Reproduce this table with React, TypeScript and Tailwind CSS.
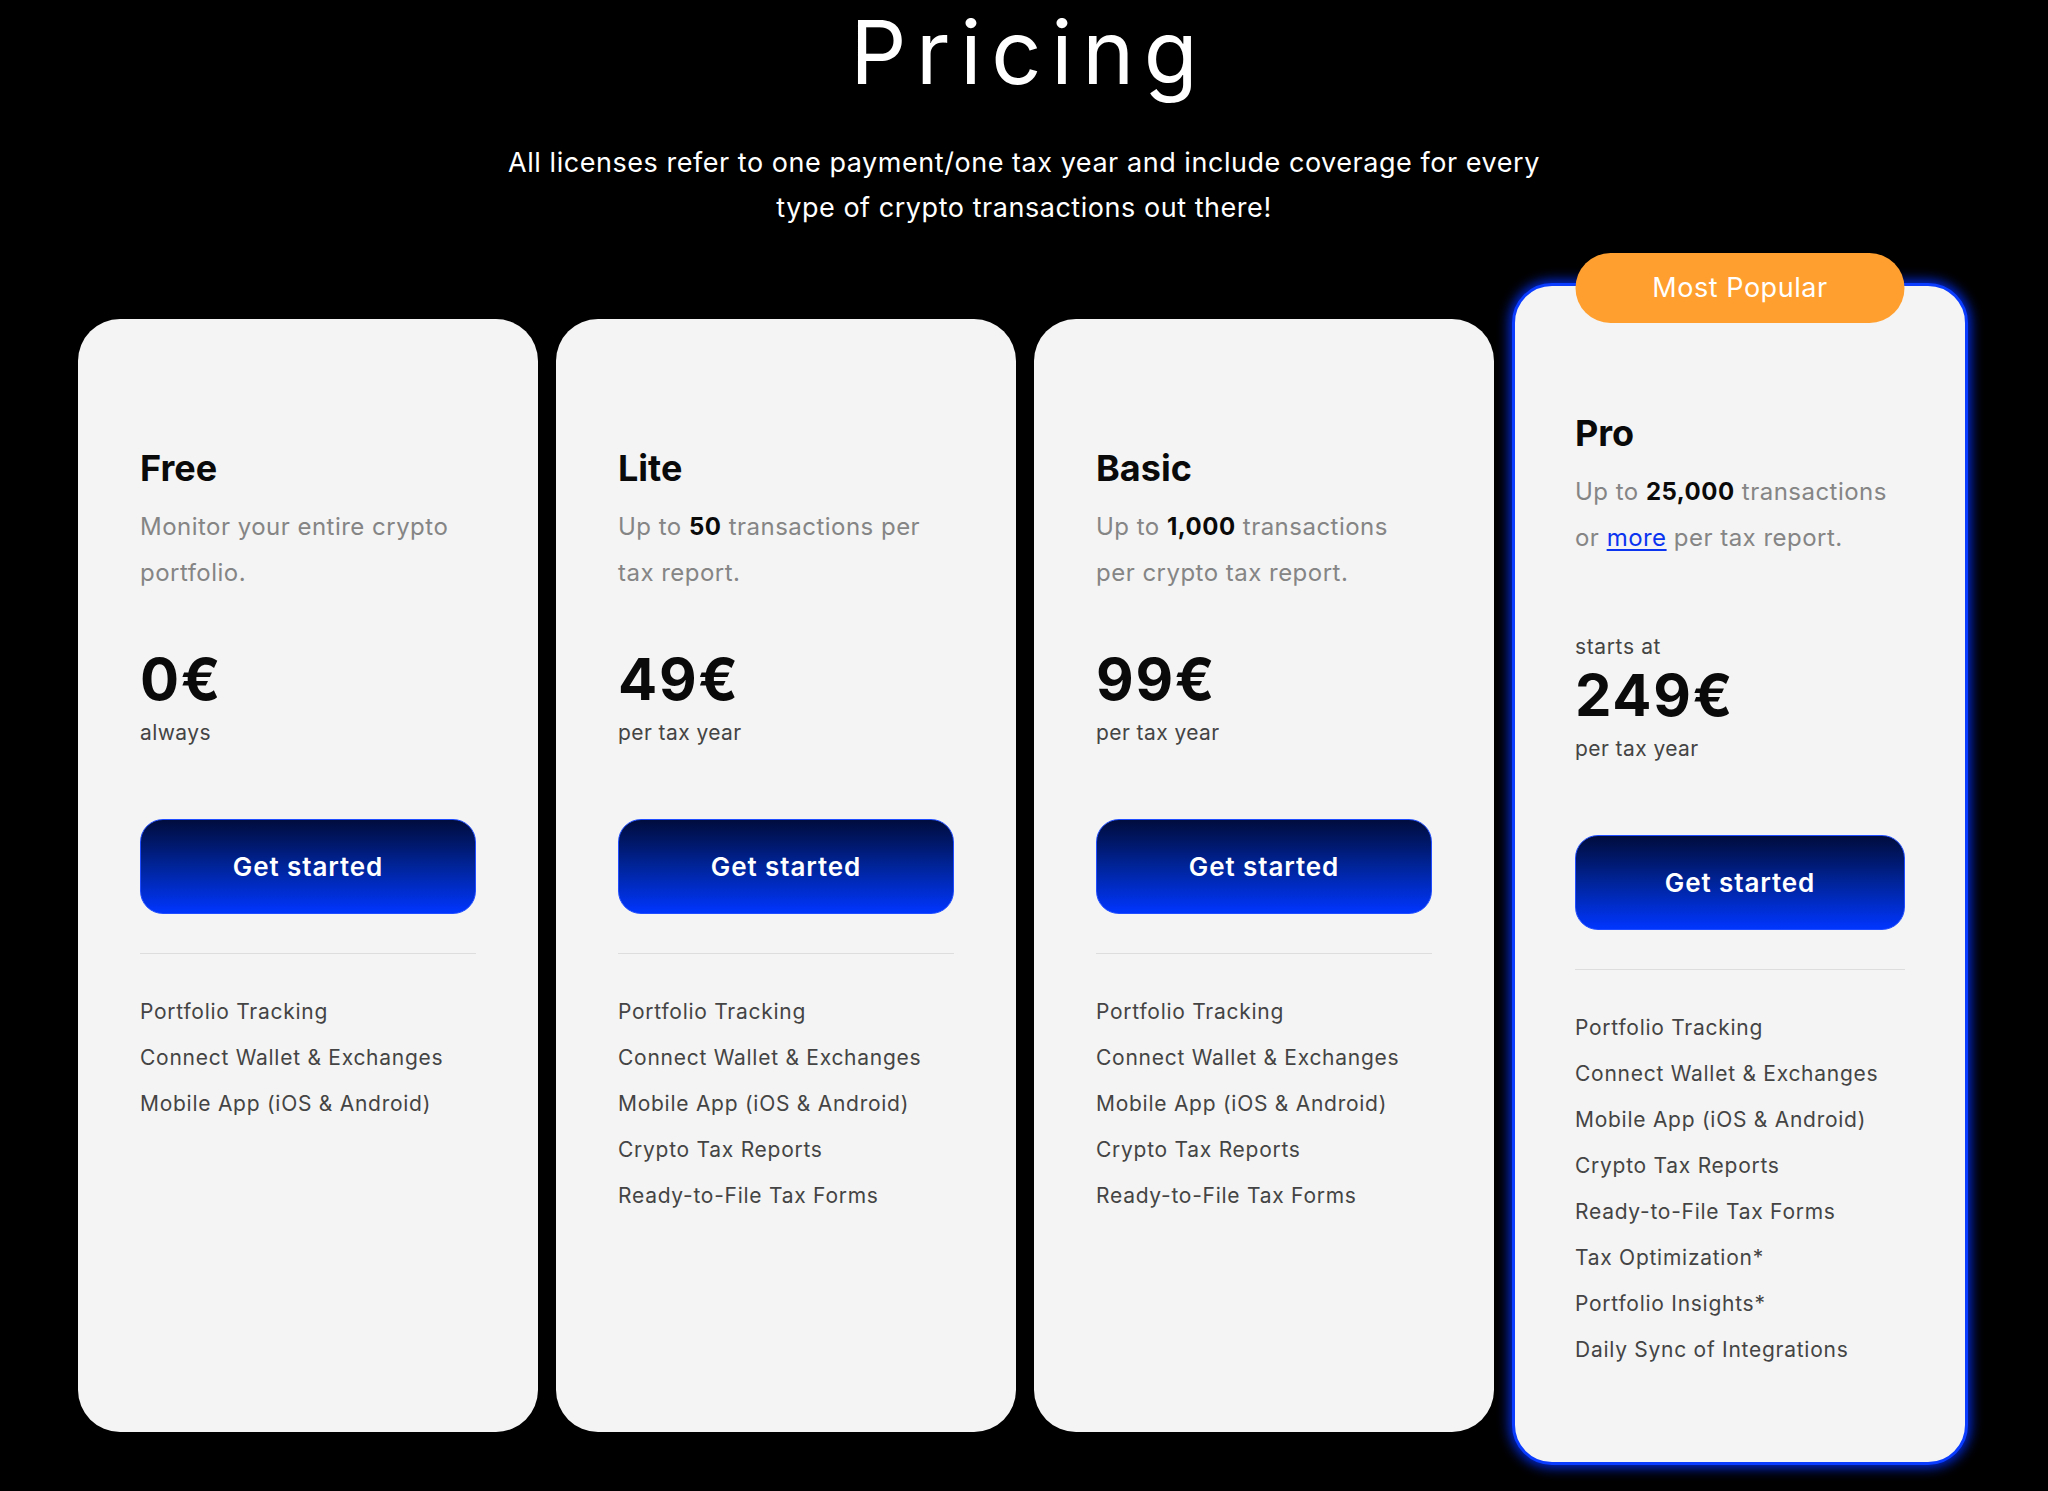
import React from "react";

type Plan = {
  name: string;
  desc: React.ReactNode;
  price: string;
  sub: string;
  features: string[];
  pro?: boolean;
};

const base = ["Portfolio Tracking", "Connect Wallet & Exchanges", "Mobile App (iOS & Android)"];
const mid = [...base, "Crypto Tax Reports", "Ready-to-File Tax Forms"];
const full = [...mid, "Tax Optimization*", "Portfolio Insights*", "Daily Sync of Integrations"];

const plans: Plan[] = [
  { name: "Free", desc: <>Monitor your entire crypto portfolio.</>, price: "0€", sub: "always", features: base },
  {
    name: "Lite",
    desc: (
      <>
        Up to <b className="font-bold text-[#0a0a0a]">50</b> transactions per tax report.
      </>
    ),
    price: "49€",
    sub: "per tax year",
    features: mid,
  },
  {
    name: "Basic",
    desc: (
      <>
        Up to <b className="font-bold text-[#0a0a0a]">1,000</b> transactions per crypto tax report.
      </>
    ),
    price: "99€",
    sub: "per tax year",
    features: mid,
  },
  {
    name: "Pro",
    desc: (
      <>
        Up to <b className="font-bold text-[#0a0a0a]">25,000</b> transactions or{" "}
        <a className="text-[#0b34f0] underline underline-offset-[3px]" href="#">more</a> per tax report.
      </>
    ),
    price: "249€",
    sub: "per tax year",
    features: full,
    pro: true,
  },
];

function Card({ p }: { p: Plan }) {
  const shell = p.pro
    ? "relative w-[456px] h-[1182px] rounded-[40px] border-[3px] border-[#0a3cff] shadow-[0_0_12px_3px_rgba(0,48,255,0.85)] bg-[#f4f4f4] px-[60px] pt-[125px]"
    : "relative mt-[36px] w-[460px] h-[1113px] rounded-[42px] bg-[#f4f4f4] px-[62px] pt-[127px]";
  return (
    <div className={shell}>
      {p.pro && (
        <div className="absolute left-1/2 top-[-33px] -translate-x-1/2 w-[329px] h-[70px] rounded-full bg-[#ff9f2f] flex items-center justify-center text-white text-[27px] tracking-[0.02em]">
          Most Popular
        </div>
      )}
      <div className="text-[36px] leading-[44px] font-bold text-[#0a0a0a]">{p.name}</div>
      <div className="mt-[14px] text-[24px] leading-[46px] text-[#858585] tracking-[0.02em]">{p.desc}</div>
      {p.pro ? (
        <div className="mt-[72px] text-[21px] leading-[28px] text-[#444] tracking-[0.03em]">starts at</div>
      ) : null}
      <div
        className={
          (p.pro ? "mt-[5px]" : "mt-[54px]") +
          " text-[58px] leading-[58px] font-bold text-[#0a0a0a] tracking-[0.03em]"
        }
      >
        {p.price}
      </div>
      <div className="mt-[11px] text-[21px] leading-[28px] text-[#444] tracking-[0.02em]">{p.sub}</div>
      <button className="mt-[72px] w-full h-[95px] rounded-[23px] border border-[#1f4dff] bg-gradient-to-b from-[#000c3e] via-[#00249a] to-[#0035ff] text-white text-[26px] font-semibold tracking-[0.035em]">
        Get started
      </button>
      <div className="mt-[39px] h-px bg-[#dddddd]" />
      <ul className="mt-[35px]">
        {p.features.map((f) => (
          <li key={f} className="text-[21px] leading-[46px] text-[#444444] tracking-[0.035em]">
            {f}
          </li>
        ))}
      </ul>
    </div>
  );
}

export default function App() {
  return (
    <div
      className="min-h-[1491px] w-full bg-black text-white pt-[8px]"
      style={{ fontFamily: "Inter, 'Liberation Sans', sans-serif" }}
    >
      <h1 className="text-center text-[88px] leading-[88px] font-normal tracking-[0.11em] pl-[0.11em]">Pricing</h1>
      <p className="mt-[44px] text-center text-[27px] leading-[45px] tracking-[0.02em]">
        All licenses refer to one payment/one tax year and include coverage for every
        <br />
        type of crypto transactions out there!
      </p>
      <div className="mt-[53px] flex justify-center items-start gap-[18px] pr-[2px]">
        {plans.map((p) => (
          <Card key={p.name} p={p} />
        ))}
      </div>
    </div>
  );
}
